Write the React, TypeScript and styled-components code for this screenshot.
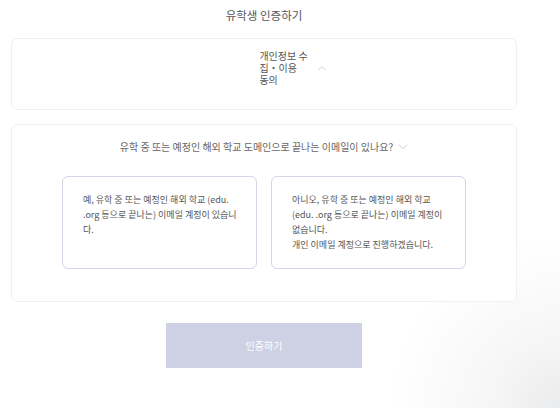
import React from "react";
import styled, { createGlobalStyle } from "styled-components";

const GlobalStyle = createGlobalStyle`
    html, body {
        margin: 0;
        padding: 0;
        background: #fff;
    }
    body {
        width: 560px;
        height: 408px;
        overflow: hidden;
        font-family: "Noto Sans CJK KR", "Noto Sans", sans-serif;
        background: radial-gradient(circle at 100% 100%, #eaebec 0, #f6f6f7 70px, #fff 170px);
    }
`;

const Page = styled.main`
    width: 528px;
    padding: 5px 11px 0;
    box-sizing: border-box;
    display: flex;
    flex-direction: column;
`;

const Title = styled.h1`
    margin: 0;
    height: 20px;
    line-height: 20px;
    font-size: 11.5px;
    font-weight: 400;
    color: #555;
    text-align: center;
`;

const Card = styled.section`
    border: 1px solid #f1f1f1;
    border-radius: 6px;
    background: #fff;
`;

const AgreeCard = styled(Card)`
    margin-top: 13px;
    padding: 11px 0 23px;
`;

const QuestionCard = styled(Card)`
    margin-top: 14px;
    padding: 14px 0 32px;
`;

const Toggle = styled.div<{ shift: number }>`
    display: flex;
    justify-content: center;
    align-items: center;
    padding-left: ${({ shift }) => shift}px;
`;

const AgreeLabel = styled.div`
    font-size: 10px;
    line-height: 12px;
    color: #555;
    white-space: nowrap;
`;

const Question = styled.div`
    font-size: 10px;
    line-height: 16px;
    color: #666;
`;

const Chevron = styled.svg<{ gap: number }>`
    margin-left: ${({ gap }) => gap}px;
    flex-shrink: 0;
`;

const Options = styled.div`
    display: flex;
    justify-content: center;
    gap: 14px;
    margin-top: 21px;
`;

const Option = styled.div`
    width: 195px;
    height: 93px;
    box-sizing: border-box;
    padding: 15px 20px;
    border: 1px solid #d3d7e7;
    border-radius: 6px;
    background: #fff;
    font-size: 9px;
    line-height: 15px;
    color: #555;
    white-space: nowrap;
    cursor: pointer;
`;

const Submit = styled.button`
    align-self: center;
    margin-top: 21px;
    width: 196px;
    height: 45px;
    border: none;
    background: #cdd1e3;
    color: #fff;
    font-family: inherit;
    font-size: 10px;
`;

const ChevronIcon = ({ up, gap }: { up?: boolean; gap: number }) => (
    <Chevron gap={gap} width="10" height="6" viewBox="0 0 10 6">
        <path
            d={up ? "M1.5 5 L5 1.5 L8.5 5" : "M1 0.8 L5 4.8 L9 0.8"}
            fill="none"
            stroke="#c9cde2"
            strokeWidth="1"
        />
    </Chevron>
);

const App = () => {
    return (
        <>
            <GlobalStyle />
            <Page>
                <Title>유학생 인증하기</Title>
                <AgreeCard>
                    <Toggle shift={58}>
                        <AgreeLabel>
                            개인정보 수<br />
                            집・이용<br />
                            동의
                        </AgreeLabel>
                        <ChevronIcon up gap={9} />
                    </Toggle>
                </AgreeCard>
                <QuestionCard>
                    <Toggle shift={0}>
                        <Question>유학 중 또는 예정인 해외 학교 도메인으로 끝나는 이메일이 있나요?</Question>
                        <ChevronIcon gap={5} />
                    </Toggle>
                    <Options>
                        <Option>
                            예, 유학 중 또는 예정인 해외 학교 (edu.<br />
                            .org 등으로 끝나는) 이메일 계정이 있습니<br />
                            다.
                        </Option>
                        <Option>
                            아니오, 유학 중 또는 예정인 해외 학교<br />
                            (edu. .org 등으로 끝나는) 이메일 계정이<br />
                            없습니다.<br />
                            개인 이메일 계정으로 진행하겠습니다.
                        </Option>
                    </Options>
                </QuestionCard>
                <Submit>인증하기</Submit>
            </Page>
        </>
    );
};

export default App;
